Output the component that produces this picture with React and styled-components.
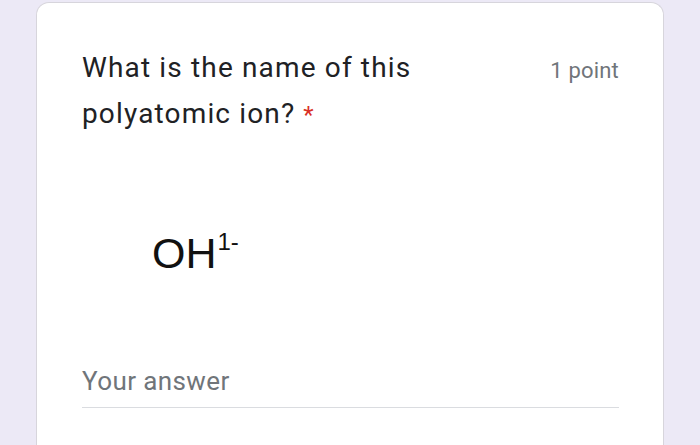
import React from "react";
import styled, { createGlobalStyle } from "styled-components";

const Global = createGlobalStyle`
  html, body { margin: 0; padding: 0; background: #ece9f6; }
  body { width: 700px; height: 445px; overflow: hidden; font-family: Roboto, "Liberation Sans", sans-serif; }
`;

const Page = styled.div`
  padding: 2px 36px 0 36px;
  height: 443px;
`;

const Card = styled.div`
  background: #ffffff;
  border: 1.5px solid #d7d5dc;
  border-bottom: none;
  border-radius: 13px 13px 0 0;
  height: 460px;
  padding: 42px 44px 0 45px;
  box-sizing: border-box;
`;

const Header = styled.div`
  display: flex;
  justify-content: space-between;
  align-items: flex-start;
`;

const Title = styled.div`
  font-size: 28px;
  line-height: 46px;
  color: #202124;
  width: 380px;
  letter-spacing: 1.15px;
`;

const Star = styled.span`
  color: #d93025;
  margin-left: 8px;
  font-size: 24px;
  letter-spacing: 0;
`;

const Points = styled.div`
  font-size: 22px;
  color: #70757a;
  line-height: 24px;
  margin-top: 14px;
  letter-spacing: 0.2px;
`;

const Formula = styled.div`
  margin: 90px 0 0 70px;
  font-family: "Liberation Sans", Arial, sans-serif;
  font-size: 43px;
  line-height: 50px;
  color: #111;
`;

const Sup = styled.sup`
  font-size: 24px;
  vertical-align: 18px;
  line-height: 0;
  margin-left: 1px;
`;

const Answer = styled.div`
  margin-top: 87px;
  font-size: 26px;
  color: #70757a;
  line-height: 32px;
  letter-spacing: 0.4px;
  padding-bottom: 10px;
  border-bottom: 1.5px solid #dadce0;
`;

export default function App() {
  return (
    <>
      <Global />
      <Page>
        <Card>
          <Header>
            <Title>
              What is the name of this polyatomic ion?<Star>*</Star>
            </Title>
            <Points>1 point</Points>
          </Header>
          <Formula>
            OH<Sup>1-</Sup>
          </Formula>
          <Answer>Your answer</Answer>
        </Card>
      </Page>
    </>
  );
}
